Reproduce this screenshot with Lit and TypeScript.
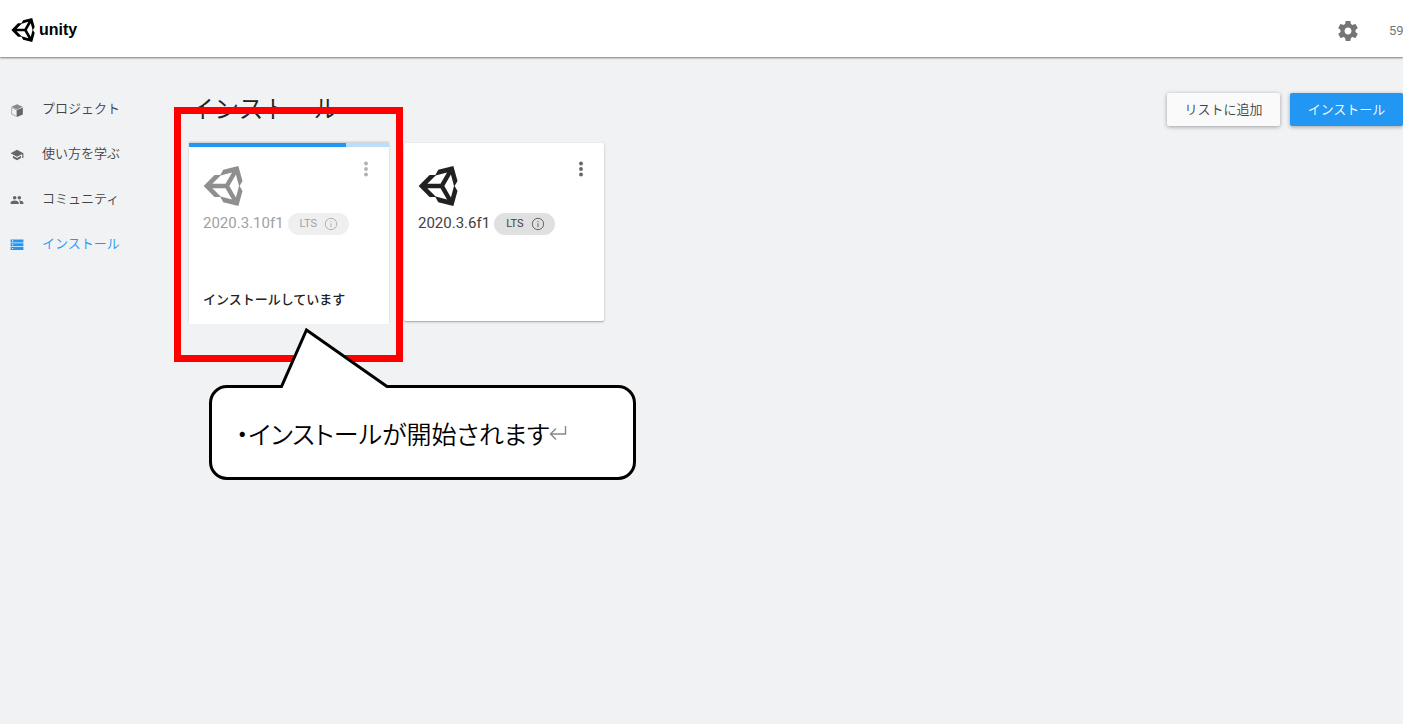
import { LitElement, html, css, svg } from "lit";
import { customElement, property } from "lit/decorators.js";

const UNITY =
  "M9.11,17H6.5L1.59,12L6.5,7H9.11L10.42,4.74L17.21,3L19.08,9.74L17.77,12L19.08,14.26L17.21,21L10.42,19.26L9.11,17M9.25,16.75L14.38,18.13L11.42,13H5.5L9.25,16.75M16.12,17.13L17.5,12L16.12,6.87L13.15,12L16.12,17.13M9.25,7.25L5.5,11H11.42L14.38,5.87L9.25,7.25Z";

const unityMark = (size: number) => html`
  <svg width=${size} height=${size} viewBox="1.3 3 18 18" fill="currentColor" aria-hidden="true">
    <path fill-rule="evenodd" d=${UNITY}></path>
  </svg>
`;

interface NavItem {
  label: string;
  icon: unknown;
  current?: boolean;
}

const NAV: NavItem[] = [
  {
    label: "プロジェクト",
    icon: svg`<path d="M12 2l9.500 4.500L12 11L2.500 6.500z" opacity=".75"></path><path d="M12 12L22 7.500V19.500L12 24z"></path><path d="M2.800 7.800L11.500 12V23L2.800 19z" fill="none" stroke="currentColor" stroke-width="1.200" opacity=".7"></path>`,
  },
  {
    label: "使い方を学ぶ",
    icon: svg`<path d="M5 13.18v4L12 21l7-3.82v-4L12 17l-7-3.82zM12 3L1 9l11 6 9-4.91V17h2V9L12 3z"></path>`,
  },
  {
    label: "コミュニティ",
    icon: svg`<path d="M16 11c1.66 0 2.99-1.34 2.99-3S17.66 5 16 5c-1.66 0-3 1.34-3 3s1.34 3 3 3zm-8 0c1.66 0 2.99-1.34 2.99-3S9.66 5 8 5C6.34 5 5 6.34 5 8s1.34 3 3 3zm0 2c-2.33 0-7 1.17-7 3.5V19h14v-2.5c0-2.33-4.67-3.5-7-3.5zm8 0c-.29 0-.62.02-.97.05 1.16.84 1.97 1.97 1.97 3.45V19h6v-2.5c0-2.33-4.67-3.5-7-3.5z"></path>`,
  },
  {
    label: "インストール",
    current: true,
    icon: svg`<path fill-rule="evenodd" d="M1 2.500h22v5H1zM1 9h22v5H1zM1 15.500h22v5H1zM3.500 4v2h2V4zM3.500 10.500v2h2v-2zM3.500 17v2h2v-2z"></path>`,
  },
];

@customElement("install-card")
class InstallCard extends LitElement {
  @property() version = "";
  @property({ type: Number }) progress = -1;
  @property() status = "";

  static styles = css`
    :host {
      display: block;
      position: relative;
      width: 200px;
    }
    .card {
      box-sizing: border-box;
      min-height: 178px;
      display: flex;
      flex-direction: column;
      background: #fff;
      border-radius: 2px;
      box-shadow: 0 1px 3px rgba(0, 0, 0, 0.2), 0 1px 1px rgba(0, 0, 0, 0.16);
    }
    .card.busy {
      min-height: 181px;
      border-radius: 0;
      box-shadow: 0 -1px 2px rgba(0, 0, 0, 0.18);
    }
    progress {
      appearance: none;
      display: block;
      width: 100%;
      height: 4px;
      margin-bottom: -4px;
      border: 0;
    }
    progress::-webkit-progress-bar {
      background: #bbdefb;
    }
    progress::-webkit-progress-value {
      background: #2196f3;
    }
    .body {
      flex: 1;
      display: flex;
      flex-direction: column;
      padding: 23px 15px 14px 14px;
    }
    .busy .top,
    .busy .version {
      opacity: 0.5;
    }
    .top {
      display: flex;
      justify-content: space-between;
      align-items: flex-start;
      color: #212121;
    }
    .top svg {
      display: block;
    }
    .menu {
      display: block;
      padding: 0;
      margin: -9px -4px 0 0;
      border: 0;
      background: none;
      color: #666;
    }
    .version {
      display: flex;
      align-items: center;
      gap: 4px;
      margin-top: 7px;
      font-size: 15px;
      line-height: 22px;
      color: #424242;
    }
    .number {
      margin-top: -2px;
    }
    .pill {
      box-sizing: border-box;
      display: flex;
      align-items: center;
      gap: 7px;
      width: 61px;
      height: 22px;
      padding: 0 10px 0 12px;
      border-radius: 11px;
      background: #e0e0e0;
      font-size: 11px;
      color: #424242;
    }
    .pill svg {
      flex: none;
      color: #666;
    }
    .status {
      margin: auto 0 0;
      font-size: 13px;
      line-height: 20px;
      font-weight: 500;
      color: #212121;
    }
  `;

  render() {
    const busy = this.progress >= 0;
    return html`
      <article class="card ${busy ? "busy" : ""}">
        ${busy ? html`<progress max="100" value=${this.progress} aria-label=${this.status}></progress>` : ""}
        <div class="body">
          <div class="top">
            ${unityMark(40)}
            <button class="menu" type="button" aria-label="メニュー">
              <svg width="24" height="24" viewBox="0 0 24 24" fill="currentColor">
                <circle cx="12" cy="6.5" r="1.9"></circle>
                <circle cx="12" cy="12" r="1.9"></circle>
                <circle cx="12" cy="17.5" r="1.9"></circle>
              </svg>
            </button>
          </div>
          <div class="version">
            <span class="number">${this.version}</span>
            <span class="pill">
              LTS
              <svg width="14" height="14" viewBox="0 0 14 14" fill="none" stroke="currentColor" aria-hidden="true">
                <circle cx="7" cy="7" r="5.700"></circle>
                <path d="M7 4v1.200M7 6.300v4"></path>
              </svg>
            </span>
          </div>
          ${this.status ? html`<p class="status">${this.status}</p>` : ""}
        </div>
      </article>
      <slot></slot>
    `;
  }
}

@customElement("app-root")
class AppRoot extends LitElement {
  static styles = css`
    :host {
      display: flex;
      flex-direction: column;
      min-height: 100vh;
      overflow: hidden;
      background: #f1f2f4;
      color: #424242;
      font-family: Roboto, "Noto Sans CJK JP", sans-serif;
    }
    header {
      display: flex;
      align-items: center;
      justify-content: space-between;
      height: 57px;
      padding-left: 11px;
      background: #fff;
      box-shadow: 0 1px 2px rgba(0, 0, 0, 0.5);
    }
    .brand {
      display: flex;
      align-items: center;
      gap: 4px;
      margin-top: 3px;
      color: #000;
      font: 700 16px/24px "Liberation Sans", sans-serif;
    }
    .tools {
      display: flex;
      align-items: center;
      gap: 29px;
      margin-top: 4px;
      color: #757575;
    }
    .gear {
      padding: 0;
      border: 0;
      background: none;
      color: inherit;
    }
    .gear svg,
    .brand svg {
      display: block;
    }
    .account {
      width: 14px;
      white-space: nowrap;
      font-size: 13px;
      line-height: 20px;
    }
    .page {
      flex: 1;
      display: flex;
    }
    nav {
      flex: none;
      box-sizing: border-box;
      width: 189px;
      padding: 29px 0 0 10px;
    }
    nav a {
      display: flex;
      align-items: center;
      gap: 18px;
      height: 45px;
      color: #444;
      font-size: 13px;
      font-weight: 350;
      line-height: 20px;
      text-decoration: none;
    }
    nav svg {
      color: #666;
      margin-top: 2px;
    }
    nav a.current,
    nav a.current svg {
      color: #2196f3;
    }
    main {
      flex: 1;
      min-width: 0;
    }
    .bar {
      display: flex;
      align-items: center;
      justify-content: space-between;
      padding-top: 36px;
    }
    h1 {
      margin: 0;
      font-size: 25px;
      line-height: 32px;
      font-weight: 350;
      color: #212121;
    }
    .actions {
      display: flex;
      gap: 10px;
    }
    .actions button {
      width: 113px;
      height: 33px;
      padding: 0 0 2px;
      border: 0;
      border-radius: 2px;
      background: #fafafa;
      color: #424242;
      font: inherit;
      font-size: 13px;
      font-weight: 350;
      box-shadow: 0 1px 4px rgba(0, 0, 0, 0.35);
    }
    .actions .primary {
      background: #2196f3;
      color: #fff;
    }
    .cards {
      display: flex;
      align-items: flex-start;
      gap: 15px;
      padding-top: 17px;
    }
    .marked {
      z-index: 1;
    }
    .frame {
      position: absolute;
      inset: -36px -14px -38px -15px;
      border: 7px solid #f00;
    }
    .callout {
      position: absolute;
      top: 242px;
      left: 20px;
      box-sizing: border-box;
      width: 427px;
      height: 95px;
      display: flex;
      align-items: center;
      padding-left: 24px;
      border: 3px solid #000;
      border-radius: 18px;
      background: #fff;
      color: #000;
      font-family: "Noto Sans CJK JP", sans-serif;
      font-size: 25px;
      font-weight: 350;
      line-height: 36px;
      font-feature-settings: "palt";
      white-space: nowrap;
    }
    .tail {
      position: absolute;
      top: -60px;
      left: 66px;
    }
  `;

  render() {
    return html`
      <header>
        <div class="brand">${unityMark(24)}<span>unity</span></div>
        <div class="tools">
          <button class="gear" type="button" aria-label="設定">
            <svg width="24" height="24" viewBox="0 0 24 24" fill="currentColor">
              <path
                d="M19.43 12.98c.04-.32.07-.64.07-.98s-.03-.66-.07-.98l2.11-1.65c.19-.15.24-.42.12-.64l-2-3.46c-.12-.22-.39-.3-.61-.22l-2.49 1c-.52-.4-1.08-.73-1.69-.98l-.38-2.65C14.46 2.18 14.25 2 14 2h-4c-.25 0-.46.18-.49.42l-.38 2.65c-.61.25-1.17.59-1.69.98l-2.49-1c-.23-.09-.49 0-.61.22l-2 3.46c-.13.22-.07.49.12.64l2.11 1.65c-.04.32-.07.65-.07.98s.03.66.07.98l-2.11 1.65c-.19.15-.24.42-.12.64l2 3.46c.12.22.39.3.61.22l2.49-1c.52.4 1.08.73 1.69.98l.38 2.65c.03.24.24.42.49.42h4c.25 0 .46-.18.49-.42l.38-2.65c.61-.25 1.17-.59 1.69-.98l2.49 1c.23.09.49 0 .61-.22l2-3.46c.12-.22.07-.49-.12-.64l-2.11-1.65zM12 15.5c-1.93 0-3.5-1.57-3.5-3.5s1.57-3.5 3.5-3.5 3.5 1.57 3.5 3.5-1.57 3.5-3.5 3.5z"
              ></path>
            </svg>
          </button>
          <span class="account">59</span>
        </div>
      </header>
      <div class="page">
        <nav>
          ${NAV.map(
            (item) => html`
              <a href="#" class=${item.current ? "current" : ""}>
                <svg width="14" height="14" viewBox="0 0 24 24" fill="currentColor" aria-hidden="true">${item.icon}</svg>
                <span>${item.label}</span>
              </a>
            `
          )}
        </nav>
        <main>
          <div class="bar">
            <h1>インストール</h1>
            <div class="actions">
              <button type="button">リストに追加</button>
              <button type="button" class="primary">インストール</button>
            </div>
          </div>
          <div class="cards">
            <install-card class="marked" version="2020.3.10f1" progress="78.5" status="インストールしています">
              <div class="frame"></div>
              <div class="callout">
                <svg class="tail" width="114" height="62" viewBox="0 0 114 62" aria-hidden="true">
                  <path d="M3 62V59L29 2L110 59V62Z" fill="#fff"></path>
                  <path d="M0 58.5H3.500L28.500 2L109 58.500H114" fill="none" stroke="#000" stroke-width="3"></path>
                </svg>
                <span>・インストールが開始されます</span>
                <svg width="18" height="16" viewBox="0 0 18 16" fill="none" stroke="#888" stroke-width="1.4" aria-hidden="true">
                  <path d="M16.500 1V9H1.500M7 3.500L1.500 9L7 14.500"></path>
                </svg>
              </div>
            </install-card>
            <install-card version="2020.3.6f1"></install-card>
          </div>
        </main>
      </div>
    `;
  }
}
